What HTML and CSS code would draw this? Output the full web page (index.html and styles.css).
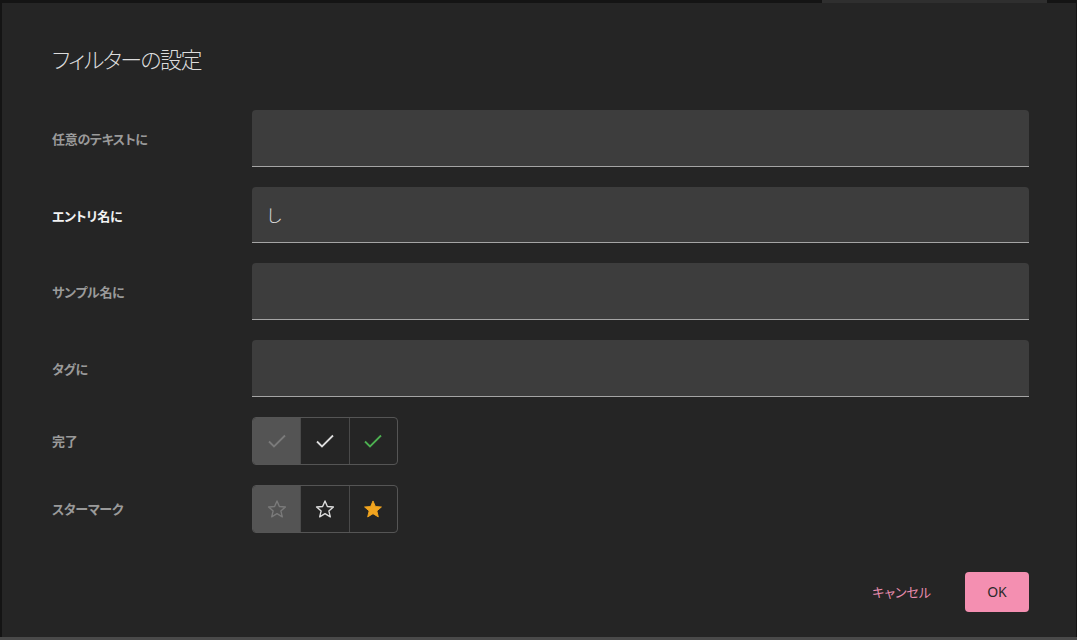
FILE: index.html
```html
<!DOCTYPE html>
<html lang="ja">
<head>
<meta charset="utf-8">
<title>フィルターの設定</title>
<link rel="stylesheet" href="styles.css">
</head>
<body>
<div class="backdrop-band"></div>
<div class="dialog">
  <h1 class="title">フィルターの設定</h1>
  <div class="form">
    <div class="label">任意のテキストに</div>
    <div class="field"></div>

    <div class="label active">エントリ名に</div>
    <div class="field"><span class="value">し</span></div>

    <div class="label">サンプル名に</div>
    <div class="field"></div>

    <div class="label">タグに</div>
    <div class="field"></div>

    <div class="label">完了</div>
    <div class="toggle">
      <div class="tbtn selected">
        <svg viewBox="0 0 24 24" width="24" height="24"><path d="M4 12.5l5 5L20 6.5" fill="none" stroke="#7a7a7a" stroke-width="1.8"/></svg>
      </div>
      <div class="tbtn">
        <svg viewBox="0 0 24 24" width="24" height="24"><path d="M4 12.5l5 5L20 6.5" fill="none" stroke="#dddddd" stroke-width="1.8"/></svg>
      </div>
      <div class="tbtn">
        <svg viewBox="0 0 24 24" width="24" height="24"><path d="M4 12.5l5 5L20 6.5" fill="none" stroke="#4caf50" stroke-width="1.8"/></svg>
      </div>
    </div>

    <div class="label">スターマーク</div>
    <div class="toggle">
      <div class="tbtn selected">
        <svg viewBox="0 0 24 24" width="22" height="22"><path d="M12 3.2l2.6 6.1 6.6.5-5 4.3 1.6 6.5L12 17.1l-5.8 3.5 1.6-6.5-5-4.3 6.6-.5z" fill="none" stroke="#7a7a7a" stroke-width="1.5" stroke-linejoin="round"/></svg>
      </div>
      <div class="tbtn">
        <svg viewBox="0 0 24 24" width="22" height="22"><path d="M12 3.2l2.6 6.1 6.6.5-5 4.3 1.6 6.5L12 17.1l-5.8 3.5 1.6-6.5-5-4.3 6.6-.5z" fill="none" stroke="#dddddd" stroke-width="1.5" stroke-linejoin="round"/></svg>
      </div>
      <div class="tbtn">
        <svg viewBox="0 0 24 24" width="22" height="22"><path d="M12 3.2l2.6 6.1 6.6.5-5 4.3 1.6 6.5L12 17.1l-5.8 3.5 1.6-6.5-5-4.3 6.6-.5z" fill="#f2a51f" stroke="#f2a51f" stroke-width="1" stroke-linejoin="round"/></svg>
      </div>
    </div>
  </div>
  <div class="actions">
    <button class="btn-cancel">キャンセル</button>
    <button class="btn-ok">OK</button>
  </div>
</div>
</body>
</html>
```

FILE: styles.css
```css
html, body {
  margin: 0;
  padding: 0;
}
body {
  width: 1077px;
  height: 640px;
  background: linear-gradient(to bottom, #141414 0, #141414 637px, #4a4a4a 637px);
  overflow: hidden;
  position: relative;
  font-family: "Noto Sans CJK JP", "Noto Sans", sans-serif;
  font-feature-settings: "palt";
}
.backdrop-band {
  position: absolute;
  left: 822px;
  top: 0;
  width: 225px;
  height: 3px;
  background: #2f2f2f;
}
.dialog {
  position: relative;
  margin: 3px 0 0 2px;
  width: 1074px;
  height: 634px;
  box-sizing: border-box;
  background: #252525;
  padding: 40px 47px 0 50px;
  display: flex;
  flex-direction: column;
}
.title {
  margin: 0 0 37px 0;
  font-size: 22px;
  line-height: 30px;
  font-weight: 300;
  letter-spacing: -1.6px;
  color: #dcdcdc;
}
.form {
  display: grid;
  grid-template-columns: 200px 777px;
  row-gap: 20px;
  align-items: center;
}
.label {
  font-size: 13px;
  font-weight: 700;
  letter-spacing: -0.3px;
  color: #9a9a9a;
}
.label.active {
  color: #f2f2f2;
}
.field {
  height: 56.7px;
  box-sizing: border-box;
  background: #3d3d3d;
  border-radius: 4px 4px 0 0;
  border-bottom: 1px solid #a5a5a5;
  display: flex;
  align-items: center;
  padding-left: 15px;
}
.value {
  font-size: 17px;
  color: #e0e0e0;
  font-weight: 300;
}
.toggle {
  display: flex;
  width: 146px;
  height: 48px;
  box-sizing: border-box;
  border: 1px solid #555555;
  border-radius: 4px;
  overflow: hidden;
}
.tbtn {
  flex: 1;
  display: flex;
  align-items: center;
  justify-content: center;
  border-left: 1px solid #4a4a4a;
}
.tbtn:first-child {
  border-left: none;
}
.tbtn.selected {
  background: #545454;
}
.actions {
  margin-top: 39px;
  display: flex;
  justify-content: flex-end;
  align-items: center;
  gap: 18px;
}
.btn-cancel {
  background: none;
  border: none;
  font-family: "Noto Sans CJK JP", sans-serif;
  font-feature-settings: "palt";
  font-size: 13px;
  color: #e68cae;
  padding: 0 16px;
  height: 40px;
  cursor: pointer;
}
.btn-ok {
  width: 64px;
  height: 40px;
  border: none;
  border-radius: 4px;
  background: #f48fb1;
  color: #2a2a2a;
  font-family: "Noto Sans", sans-serif;
  font-size: 14px;
  cursor: pointer;
}
```
